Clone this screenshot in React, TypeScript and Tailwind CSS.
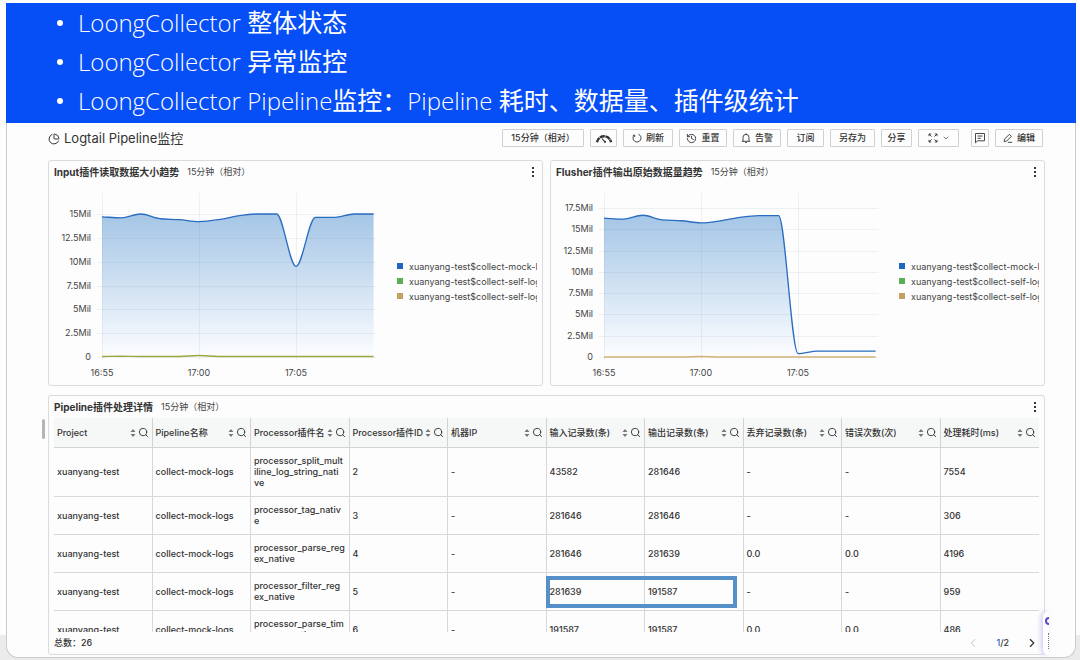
import { useId, type ReactNode } from "react";
import { ChartPie, ChevronDown, ChevronLeft, ChevronRight, History, Search } from "lucide-react";

const RANGE = "15分钟（相对）";

type ChartProps = {
  title: string;
  values: number[];
  baseline: number[];
  max: number;
  top: number;
  baseColor: string;
};

const HEADLINES = [
  ["LoongCollector ", "整体状态"],
  ["LoongCollector ", "异常监控"],
  ["LoongCollector Pipeline", "监控：", "Pipeline ", "耗时、数据量、插件级统计"],
];

const SERIES = [
  { name: "xuanyang-test$collect-mock-logs", color: "bg-[#1f66c0]" },
  { name: "xuanyang-test$collect-self-logs", color: "bg-[#5aae54]" },
  { name: "xuanyang-test$collect-self-logs", color: "bg-[#c2a262]" },
];

const COLUMNS = [
  "Project",
  "Pipeline名称",
  "Processor插件名",
  "Processor插件ID",
  "机器IP",
  "输入记录数(条)",
  "输出记录数(条)",
  "丢弃记录数(条)",
  "错误次数(次)",
  "处理耗时(ms)",
];

const ROWS = [
  ["processor_split_mult\niline_log_string_nati\nve", "2", "-", "43582", "281646", "-", "-", "7554"],
  ["processor_tag_nativ\ne", "3", "-", "281646", "281646", "-", "-", "306"],
  ["processor_parse_reg\nex_native", "4", "-", "281646", "281639", "0.0", "0.0", "4196"],
  ["processor_filter_reg\nex_native", "5", "-", "281639", "191587", "-", "-", "959"],
  ["processor_parse_tim\nestamp_native", "6", "-", "191587", "191587", "0.0", "0.0", "486"],
].map((row) => ["xuanyang-test", "collect-mock-logs", ...row]);

const X0 = 48;
const Y0 = 174;
const STEP = 19.4;

// monotone cubic through evenly spaced points
function curve(ys: number[]) {
  const d = ys.slice(1).map((y, i) => (y - ys[i]) / STEP);
  const m = ys.map((_, i) => {
    if (i === 0) return d[0];
    if (i === ys.length - 1) return d[i - 1];
    const a = d[i - 1];
    const b = d[i];
    return a * b <= 0 ? 0 : Math.sign(a) * Math.min(Math.abs(a), Math.abs(b), Math.abs(a + b) / 4) * 2;
  });
  return ys
    .map((y, i) => {
      const x = X0 + i * STEP;
      if (i === 0) return `M${x},${y}`;
      const h = STEP / 3;
      return `C${x - STEP + h},${ys[i - 1] + m[i - 1] * h} ${x - h},${y - m[i] * h} ${x},${y}`;
    })
    .join("");
}

function MoreButton() {
  return (
    <button type="button" aria-label="更多" className="flex h-4 w-2 flex-col items-center justify-center gap-0.5">
      <span className="size-0.5 bg-[#333]" />
      <span className="size-0.5 bg-[#333]" />
      <span className="size-0.5 bg-[#333]" />
    </button>
  );
}

function PanelHeader({ title }: { title: string }) {
  return (
    <div className="flex h-[22px] items-center gap-2">
      <h2 className="text-[10px] font-bold text-[#333]">{title}</h2>
      <span className="flex-1 text-[9px] text-[#444]">{RANGE}</span>
      <MoreButton />
    </div>
  );
}

function ChartPanel({ title, values, baseline, max, top, baseColor }: ChartProps) {
  const gradient = useId();
  const toY = (v: number) => Y0 - (v / max) * (Y0 - top);
  const line = curve(values.map(toY));
  const right = X0 + (values.length - 1) * STEP;
  const ticks = Array.from({ length: max / 2.5 + 1 }, (_, i) => i * 2.5);

  return (
    <section className="min-w-0 flex-1 rounded-[3px] border border-[#d9dbdc] px-[5px] pb-0.5">
      <PanelHeader title={title} />
      <div className="flex items-center">
        <svg width="340" height="200" viewBox="0 0 340 200" className="shrink-0" role="img" aria-label={title}>
          <defs>
            <linearGradient id={gradient} x1="0" y1="0" x2="0" y2="1">
              <stop offset="0" stopColor="#a5c6e6" />
              <stop offset="1" stopColor="#fcfdff" />
            </linearGradient>
          </defs>
          <path d={`${line}V${Y0}H${X0}Z`} fill={`url(#${gradient})`} />
          <g stroke="#5a7896" strokeOpacity="0.09">
            {ticks.map((t) => (
              <line key={t} x1={X0 - 5} x2={right + 3} y1={Math.round(toY(t)) + 0.5} y2={Math.round(toY(t)) + 0.5} />
            ))}
            {[0, 5, 10].map((i) => (
              <line key={i} x1={Math.round(X0 + i * STEP) + 0.5} x2={Math.round(X0 + i * STEP) + 0.5} y1="10" y2={Y0 + 4} />
            ))}
          </g>
          <path d={line} fill="none" stroke="#2a6cc0" strokeWidth="1.3" />
          <path d={curve(baseline.map(toY))} fill="none" stroke={baseColor} strokeWidth="1.4" />
          <g fill="#444" fontSize="9">
            {ticks.map((t) => (
              <text key={t} x="37" y={toY(t) + 3} textAnchor="end">
                {t ? `${t}Mil` : "0"}
              </text>
            ))}
            {["16:55", "17:00", "17:05"].map((t, i) => (
              <text key={t} x={X0 + i * 5 * STEP} y="193" textAnchor="middle">
                {t}
              </text>
            ))}
          </g>
        </svg>
        <ul className="min-w-0 flex-1 overflow-hidden pb-1 pl-[3px] text-[9px] leading-[15px] text-[#444]">
          {SERIES.map((s, i) => (
            <li key={i} className="flex items-center gap-1.5 overflow-hidden whitespace-nowrap">
              <span className={`size-1.5 shrink-0 ${s.color}`} />
              <span className="overflow-hidden">{s.name}</span>
            </li>
          ))}
        </ul>
      </div>
    </section>
  );
}

function ToolButton({ children, className, label }: { children: ReactNode; className: string; label?: string }) {
  return (
    <button
      type="button"
      aria-label={label}
      className={`flex h-[18px] items-center justify-center gap-1 rounded-[1px] border border-[#cfd1d3] text-[9px] font-medium whitespace-nowrap text-[#333] ${className}`}
    >
      {children}
    </button>
  );
}

function GaugeIcon() {
  return (
    <svg width="18" height="12" viewBox="0 0 18 12" fill="none" stroke="#333">
      <path d="M2 10.2A7.1 7.1 0 0 1 16 10.2" strokeWidth="2.4" strokeDasharray="5 0.6" />
      <path d="M10 9.8 7 6.6" strokeWidth="1.1" />
      <circle cx="10" cy="9.8" r="1.1" fill="#333" stroke="none" />
    </svg>
  );
}

function ReloadIcon() {
  return (
    <svg width="10" height="10" viewBox="0 0 10 10" fill="none" stroke="currentColor" strokeWidth="0.9">
      <path d="M6.5 1.3A4 4 0 1 1 2.3 2.1" />
      <path d="M0.9 2.2H2.7V4" />
    </svg>
  );
}

function BellIcon() {
  return (
    <svg width="10" height="10" viewBox="0 0 10 10" fill="none" stroke="currentColor" strokeWidth="0.9">
      <path d="M2 8.3V4.4a3 3 0 0 1 6 0v3.9M.8 8.3h8.4M4 9.6h2M5 .3v1.2" />
    </svg>
  );
}

function ExpandIcon() {
  return (
    <svg width="10" height="10" viewBox="0 0 10 10" fill="none" stroke="currentColor" strokeWidth="0.9">
      <path d="M1 3.2V1h2.2M1 1l2.6 2.6M6.8 1H9v2.2M9 1 6.4 3.6M1 6.8V9h2.2M1 9l2.6-2.6M9 6.8V9H6.8M9 9 6.4 6.4" />
    </svg>
  );
}

function NoteIcon() {
  return (
    <svg width="12" height="12" viewBox="0 0 12 12" fill="none" stroke="currentColor" className="shrink-0">
      <path d="M1.5 1.5h9v7.3H3.7L1.5 10.8ZM3.5 4h5M3.5 6.3h3.3" strokeWidth="0.9" />
    </svg>
  );
}

function EditIcon() {
  return (
    <svg width="10" height="10" viewBox="0 0 10 10" fill="none" stroke="currentColor" strokeWidth="0.9">
      <path d="M1.5 6.2 6.4 1.3 8.4 3.3 3.5 8.2 1.2 8.6ZM4.8 9.3H9.2" />
    </svg>
  );
}

function SortIcon() {
  return (
    <svg width="6" height="8" viewBox="0 0 6 8" fill="#777">
      <path d="M3 0 5.5 3H.5ZM3 8 .5 5h5Z" />
    </svg>
  );
}

function DetailTable() {
  return (
    <div className="h-[214px] overflow-hidden">
      <table className="w-full table-fixed border-separate border-spacing-0 text-[9px] leading-[11px] font-medium text-[#333]">
        <thead>
          <tr className="bg-[#f6f7f7]">
            {COLUMNS.map((c) => (
              <th key={c} className="h-[30px] border-r border-b border-[#d0d3d6] pr-[3px] pl-[3px] text-left font-medium last:border-r-0">
                <div className="flex items-center gap-0.5 whitespace-nowrap">
                  <span className="flex-1">{c}</span>
                  <button type="button" aria-label={`排序 ${c}`}>
                    <SortIcon />
                  </button>
                  <button type="button" aria-label={`搜索 ${c}`}>
                    <Search className="size-[11px]" />
                  </button>
                </div>
              </th>
            ))}
          </tr>
        </thead>
        <tbody>
          {ROWS.map((row, r) => (
            <tr key={r}>
              {row.map((cell, i) => (
                <td key={i} className="relative border-r border-b border-[#d6d9dc] pt-[7px] pb-2 pl-[3px] whitespace-pre-line last:border-r-0">
                  {cell}
                  {r === 3 && i === 5 && (
                    <span className="absolute top-[3px] bottom-0.5 -left-px z-10 w-[196%] border-4 border-[#5590c8]" />
                  )}
                </td>
              ))}
            </tr>
          ))}
        </tbody>
      </table>
    </div>
  );
}

export default function App() {
  return (
    <div className="min-h-screen bg-[linear-gradient(#fdfdfd_635px,#ebebeb_635px)] pt-[3px] pr-1 pb-0.5 pl-1.5 font-[Inter,'Noto_Sans_CJK_SC',sans-serif]">
      <main className="relative rounded-b-xl border border-t-0 border-[#c9cbcc] bg-[#fdfdfd] pb-0.5">
        <ul className="-mx-px h-[120px] bg-[#064ef6] pl-[51px] font-['Open_Sans','Noto_Sans_CJK_SC',sans-serif] text-[24px] leading-[39px] font-light text-white">
          {HEADLINES.map((parts, i) => (
            <li key={i} className="flex items-center gap-[15px] whitespace-nowrap">
              <span className="size-1.5 rounded-full bg-white" />
              <span className="whitespace-pre">
                {parts.map((part, j) =>
                  j % 2 ? (
                    <span key={j} className="text-[25px] font-normal">
                      {part}
                    </span>
                  ) : (
                    part
                  ),
                )}
              </span>
            </li>
          ))}
        </ul>

        <div className="mr-[30px] ml-[41px]">
          <header className="flex h-[37px] items-center pr-0.5 pb-[7px]">
            <h1 className="flex flex-1 items-center gap-1 pt-0.5 text-[13px] whitespace-nowrap text-[#333]">
              <ChartPie className="size-3" />
              Logtail Pipeline监控
            </h1>
            <div className="flex items-center gap-1.5">
              <ToolButton className="w-[82px]">{RANGE}</ToolButton>
              <ToolButton className="w-[27px]" label="仪表">
                <GaugeIcon />
              </ToolButton>
              <ToolButton className="w-[50px]">
                <ReloadIcon />
                刷新
              </ToolButton>
              <ToolButton className="w-12">
                <History className="size-[11px]" />
                重置
              </ToolButton>
              <ToolButton className="w-12">
                <BellIcon />
                告警
              </ToolButton>
              <ToolButton className="w-[37px]">订阅</ToolButton>
              <ToolButton className="w-[45px]">另存为</ToolButton>
              <ToolButton className="w-[31px]">分享</ToolButton>
              <ToolButton className="w-[41px]" label="全屏">
                <ExpandIcon />
                <ChevronDown className="size-2" />
              </ToolButton>
              <ToolButton className="ml-1.5 w-[18px]" label="备注">
                <NoteIcon />
              </ToolButton>
              <ToolButton className="w-12">
                <EditIcon />
                编辑
              </ToolButton>
            </div>
          </header>

          <div className="flex gap-[7px]">
            <ChartPanel
              title="Input插件读取数据大小趋势"
              values={[14.7, 14.6, 15, 14.5, 14.4, 14.2, 14.4, 14.8, 15, 15, 9.5, 14.65, 14.65, 15, 15]}
              baseline={[0.05, 0.08, 0.05, 0.05, 0.05, 0.15, 0.05, 0.05, 0.05, 0.05, 0.05, 0.05, 0.05, 0.05, 0.05]}
              max={15}
              top={31}
              baseColor="#9aa83f"
            />
            <ChartPanel
              title="Flusher插件输出原始数据量趋势"
              values={[16.3, 16.2, 16.65, 16.1, 16, 15.75, 16, 16.4, 16.6, 16.6, 0.4, 0.7, 0.7, 0.7, 0.7]}
              baseline={[0, 0, 0, 0, 0, 0.05, 0, 0, 0, 0, 0, 0, 0, 0, 0]}
              max={17.5}
              top={25}
              baseColor="#d3b176"
            />
          </div>

          <section className="mt-[9px] rounded-[3px] border border-[#d9dbdc] px-[5px]">
            <PanelHeader title="Pipeline插件处理详情" />
            <DetailTable />
            <footer className="flex h-[22px] items-center text-[9px] font-medium text-[#333]">
              <span className="flex-1">总数：26</span>
              <nav className="flex items-center gap-4" aria-label="分页">
                <button type="button" disabled aria-label="上一页" className="text-[#bbb]">
                  <ChevronLeft className="size-[14px]" strokeWidth={1.5} />
                </button>
                <span>
                  <span className="text-[#1f66c0]">1</span>/2
                </span>
                <button type="button" aria-label="下一页">
                  <ChevronRight className="size-[14px]" />
                </button>
              </nav>
            </footer>
          </section>
        </div>

        <span className="absolute top-[416px] left-[35px] h-5 w-[3px] rounded-sm bg-[#b5b5b5]" />
        <aside className="absolute right-[26px] bottom-0.5 h-11 w-1.5 overflow-hidden rounded-l-md bg-white shadow-[-2px_0_5px_#cfcdf5]">
          <span className="absolute top-1.5 left-0.5 size-2 rounded-full border-2 border-[#5b4bc4]" />
          <span className="absolute top-[22px] right-0 h-4 border-r border-dotted border-[#777]" />
        </aside>
      </main>
    </div>
  );
}
